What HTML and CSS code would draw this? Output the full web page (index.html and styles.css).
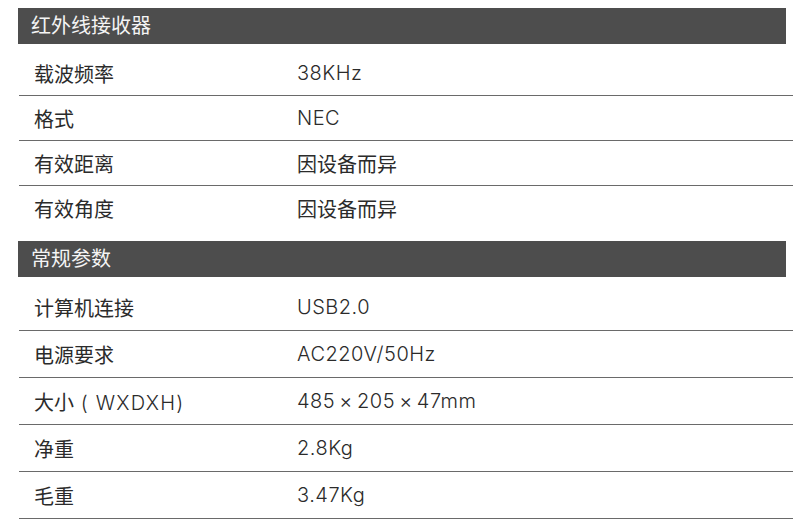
FILE: index.html
```html
<!DOCTYPE html>
<html lang="zh-CN">
<head>
<meta charset="utf-8">
<link rel="stylesheet" href="styles.css">
</head>
<body>
<div class="page">
  <section class="sec sec-ir">
    <div class="head"><span class="head-title">红外线接收器</span></div>
    <div class="rows">
      <div class="row"><span class="lab">载波频率</span><span class="val">38KHz</span></div>
      <div class="row"><span class="lab">格式</span><span class="val">NEC</span></div>
      <div class="row"><span class="lab">有效距离</span><span class="val val-cn">因设备而异</span></div>
      <div class="row row-last"><span class="lab">有效角度</span><span class="val val-cn">因设备而异</span></div>
    </div>
  </section>
  <section class="sec sec-gen">
    <div class="head"><span class="head-title">常规参数</span></div>
    <div class="rows">
      <div class="row"><span class="lab">计算机连接</span><span class="val">USB2.0</span></div>
      <div class="row"><span class="lab">电源要求</span><span class="val">AC220V/50Hz</span></div>
      <div class="row"><span class="lab">大小<span class="lat"> ( WXDXH)</span></span><span class="val">485&#8201;×&#8201;205&#8201;×&#8201;47mm</span></div>
      <div class="row"><span class="lab">净重</span><span class="val">2.8Kg</span></div>
      <div class="row"><span class="lab">毛重</span><span class="val">3.47Kg</span></div>
    </div>
  </section>
</div>
</body>
</html>
```

FILE: styles.css
```css
* { box-sizing: border-box; }
html, body { margin: 0; padding: 0; background: #fff; }
body {
  font-family: "Inter", "Noto Sans CJK SC", sans-serif;
  font-size: 20px;
  color: #2b2b2b;
}
.page {
  width: 800px;
  height: 526px;
  padding: 8px 7px 0 18px;
  overflow: hidden;
}
.sec { display: flex; flex-direction: column; }
.head {
  width: 768px;
  height: 36px;
  background: #4d4d4d;
  color: #f4f4f4;
  display: flex;
  align-items: center;
  padding-left: 13px;
}
.head-title { font-size: 20px; line-height: 1; }
.rows { display: flex; flex-direction: column; }
.sec-ir .rows { padding-top: 7px; }
.sec-ir .row { height: 45px; }
.sec-ir .row-last { border-bottom: none; }
.sec-gen { margin-top: 10px; }
.sec-gen .rows { padding-top: 7px; }
.sec-gen .row { height: 47px; }
.row {
  display: grid;
  grid-template-columns: 263px 1fr;
  align-items: center;
  border-bottom: 1.5px solid #6a6a6a;
  padding-left: 15px;
  margin-left: 1px;
}
.lab { font-size: 20px; font-weight: 400; }
.lat { font-weight: 300; letter-spacing: 1.2px; }
.val { font-size: 20px; font-weight: 300; letter-spacing: 0.5px; }
.val-cn { font-weight: 400; letter-spacing: 0; }
```
